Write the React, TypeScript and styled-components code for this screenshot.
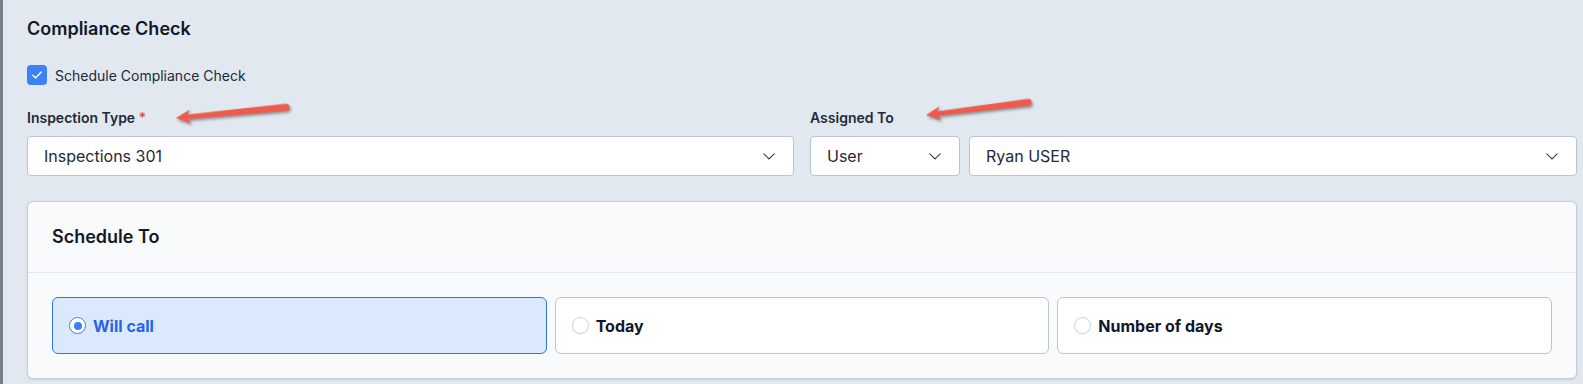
import React from 'react'
import styled, { createGlobalStyle, css } from 'styled-components'

const GlobalStyle = createGlobalStyle`
  html, body {
    margin: 0;
    background: #e2e8f0;
    font-family: Inter, "Noto Sans", "Liberation Sans", sans-serif;
    color: #111827;
  }
  * { box-sizing: border-box; }
`

const Page = styled.div`
  position: relative;
  min-height: 384px;
  border-left: 3px solid #777e8b;
  padding: 17px 6px 0 24px;
`

const Title = styled.h2`
  margin: 0;
  font-size: 18px;
  line-height: 24px;
  font-weight: 600;
  color: #111827;
`

const CheckRow = styled.label`
  display: flex;
  align-items: center;
  gap: 8px;
  margin-top: 24px;
  height: 20px;
`

const CheckBox = styled.span`
  display: inline-flex;
  align-items: center;
  justify-content: center;
  width: 20px;
  height: 20px;
  border-radius: 4px;
  background: #3b82f6;
`

const CheckLabel = styled.span`
  font-size: 14px;
  line-height: 20px;
  color: #1f2937;
  padding-top: 2px;
`

const FieldGrid = styled.div`
  display: grid;
  grid-template-columns: 1fr 1fr;
  gap: 16px;
  margin-top: 23px;
`

const Field = styled.div`
  display: flex;
  flex-direction: column;
  gap: 8px;
`

const Label = styled.div`
  font-size: 14px;
  line-height: 20px;
  font-weight: 600;
  color: #1f2937;
`

const Required = styled.span`
  color: #ef4444;
  font-weight: 500;
`

const SelectRow = styled.div`
  display: flex;
  gap: 9px;
`

const SelectBox = styled.div<{ $width?: number }>`
  display: flex;
  align-items: center;
  justify-content: space-between;
  height: 40px;
  padding: 0 18px 0 16px;
  background: #ffffff;
  border: 1px solid #b9c5d5;
  border-radius: 4px;
  font-size: 16px;
  color: #1f2937;
  ${p =>
    p.$width
      ? css`
          width: ${p.$width}px;
          flex: none;
        `
      : css`
          flex: 1;
        `}
`

const Card = styled.section`
  margin-top: 25px;
  background: #f8fafc;
  border: 1px solid #c3cddb;
  border-radius: 6px;
  box-shadow: 0 1px 2px rgba(15, 23, 42, 0.12);
`

const CardHeader = styled.div`
  display: flex;
  align-items: center;
  height: 71px;
  padding: 0 24px;
  border-bottom: 1px solid #e2e8f0;
  font-size: 18px;
  line-height: 24px;
  font-weight: 600;
  color: #111827;
`

const CardBody = styled.div`
  display: grid;
  grid-template-columns: repeat(3, 1fr);
  gap: 8px;
  padding: 24px;
`

const Option = styled.div<{ $active?: boolean }>`
  display: flex;
  align-items: center;
  gap: 7px;
  height: 57px;
  padding: 0 16px;
  border-radius: 6px;
  border: 1px solid ${p => (p.$active ? '#3274e6' : '#b9c5d5')};
  background: ${p => (p.$active ? '#dbe9fd' : '#ffffff')};
  font-size: 16px;
  font-weight: 700;
  color: ${p => (p.$active ? '#2563eb' : '#0f172a')};
`

const Radio = styled.span<{ $active?: boolean }>`
  display: inline-flex;
  align-items: center;
  justify-content: center;
  width: 17px;
  height: 17px;
  border-radius: 50%;
  background: #ffffff;
  border: ${p => (p.$active ? '1.5px solid #3b82f6' : '1px solid #cdd5e1')};
  box-shadow: 0 1px 1px rgba(15, 23, 42, 0.06);

  &::after {
    content: '';
    display: ${p => (p.$active ? 'block' : 'none')};
    width: 8px;
    height: 8px;
    border-radius: 50%;
    background: #3b82f6;
  }
`

const ArrowSvg = styled.svg`
  position: absolute;
  overflow: visible;
  transform-origin: 2px 10px;
  filter: drop-shadow(1px 2px 1.5px rgba(0, 0, 0, 0.4));
`

const Chevron = () => (
  <svg width="12" height="7" viewBox="0 0 12 7" fill="none">
    <path d="M0.8 0.8l5.2 5.2 5.2-5.2" stroke="#374151" strokeWidth="1.1" strokeLinecap="round" />
  </svg>
)

const Select: React.FC<{ value: string; width?: number }> = ({ value, width }) => (
  <SelectBox $width={width}>
    <span>{value}</span>
    <Chevron />
  </SelectBox>
)

// red annotation arrow, drawn from its tip towards the tail
const Arrow: React.FC<{ tip: [number, number]; tail: [number, number] }> = ({ tip, tail }) => {
  const dx = tail[0] - tip[0]
  const dy = tail[1] - tip[1]
  const len = Math.sqrt(dx * dx + dy * dy)
  const angle = (Math.atan2(dy, dx) * 180) / Math.PI
  return (
    <ArrowSvg
      width={len + 4}
      height={20}
      style={{ left: tip[0] - 2, top: tip[1] - 10, transform: `rotate(${angle}deg)` }}
    >
      <path
        d={`M2 10 L16.5 3 L14 7.7 L${len - 1} 6.4 A3.6 3.6 0 0 1 ${len - 1} 13.6 L14 12.3 L16.5 17 Z`}
        fill="#ee5a4d"
      />
    </ArrowSvg>
  )
}

const options = [
  { id: 'will-call', label: 'Will call' },
  { id: 'today', label: 'Today' },
  { id: 'days', label: 'Number of days' },
]

const App: React.FC = () => {
  const selected = 'will-call'

  return (
    <>
      <GlobalStyle />
      <Page>
        <Title>Compliance Check</Title>

        <CheckRow>
          <CheckBox>
            <svg width="12" height="10" viewBox="0 0 12 10" fill="none">
              <path d="M1.8 5.2l2.8 2.7 5.6-5.8" stroke="#fff" strokeWidth="1.4" strokeLinecap="round" strokeLinejoin="round" />
            </svg>
          </CheckBox>
          <CheckLabel>Schedule Compliance Check</CheckLabel>
        </CheckRow>

        <FieldGrid>
          <Field>
            <Label>
              Inspection Type <Required>*</Required>
            </Label>
            <SelectRow>
              <Select value="Inspections 301" />
            </SelectRow>
          </Field>
          <Field>
            <Label>Assigned To</Label>
            <SelectRow>
              <Select value="User" width={150} />
              <Select value="Ryan USER" />
            </SelectRow>
          </Field>
        </FieldGrid>

        <Card>
          <CardHeader>Schedule To</CardHeader>
          <CardBody>
            {options.map(option => (
              <Option key={option.id} $active={option.id === selected}>
                <Radio $active={option.id === selected} />
                {option.label}
              </Option>
            ))}
          </CardBody>
        </Card>

        <Arrow tip={[173, 118]} tail={[286, 107]} />
        <Arrow tip={[923, 115]} tail={[1028, 102]} />
      </Page>
    </>
  )
}

export default App
